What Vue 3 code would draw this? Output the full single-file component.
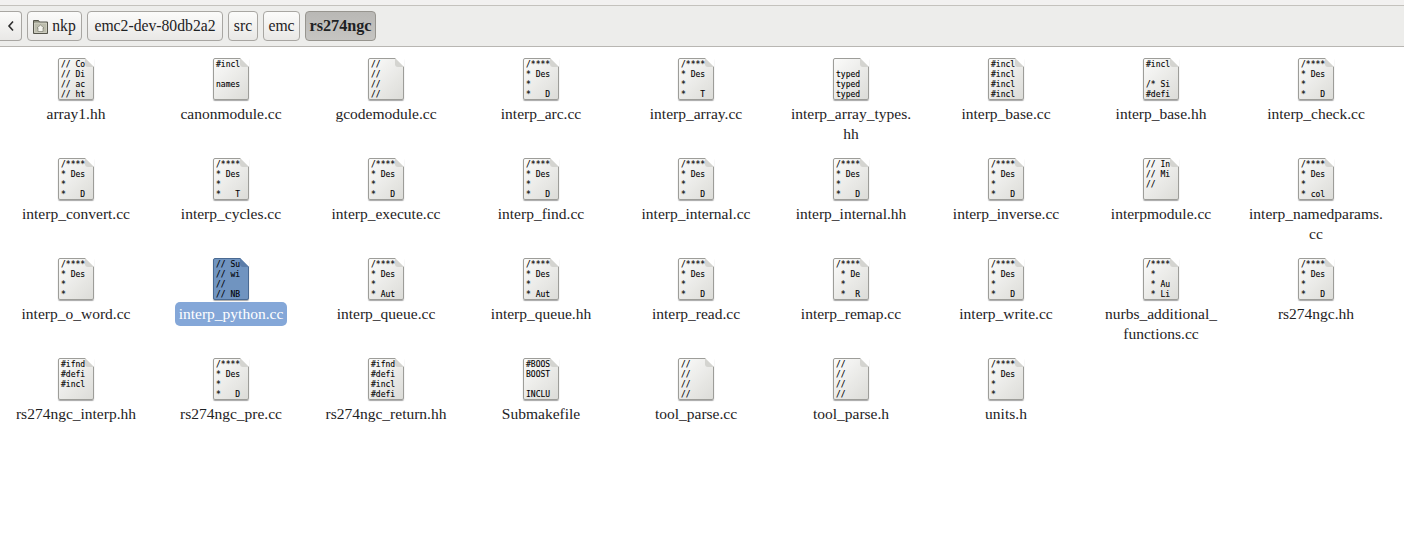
<script setup>
const H = (e) => ['/****', '* Des', '*', e]
const crumbs = [
  { label: 'emc2-dev-80db2a2', width: 136 },
  { label: 'src', width: 30 },
  { label: 'emc', width: 37 },
]
const files = [
  ['array1.hh', ['// Co', '// Di', '// ac', '// ht']],
  ['canonmodule.cc', ['#incl', '', 'names', '']],
  ['gcodemodule.cc', ['//', '//', '//', '//']],
  ['interp_arc.cc', H('*   D')],
  ['interp_array.cc', H('*   T')],
  ['interp_array_types.\nhh', ['', 'typed', 'typed', 'typed']],
  ['interp_base.cc', ['#incl', '#incl', '#incl', '#incl']],
  ['interp_base.hh', ['#incl', '', '/* Si', '#defi']],
  ['interp_check.cc', H('*   D')],
  ['interp_convert.cc', H('*   D')],
  ['interp_cycles.cc', H('*   T')],
  ['interp_execute.cc', H('*   D')],
  ['interp_find.cc', H('*   D')],
  ['interp_internal.cc', H('*   D')],
  ['interp_internal.hh', H('*   D')],
  ['interp_inverse.cc', H('*   D')],
  ['interpmodule.cc', ['// In', '// Mi', '//', '']],
  ['interp_namedparams.\ncc', H('* col')],
  ['interp_o_word.cc', H('*')],
  ['interp_python.cc', ['// Su', '// wi', '//', '// NB'], true],
  ['interp_queue.cc', H('* Aut')],
  ['interp_queue.hh', H('* Aut')],
  ['interp_read.cc', H('*   D')],
  ['interp_remap.cc', ['/****', ' * De', ' *', ' *  R']],
  ['interp_write.cc', H('*   D')],
  ['nurbs_additional_\nfunctions.cc', ['/****', ' *', ' * Au', ' * Li']],
  ['rs274ngc.hh', H('*   D')],
  ['rs274ngc_interp.hh', ['#ifnd', '#defi', '#incl', '']],
  ['rs274ngc_pre.cc', H('*   D')],
  ['rs274ngc_return.hh', ['#ifnd', '#defi', '#incl', '#defi']],
  ['Submakefile', ['#BOOS', 'BOOST', '', 'INCLU']],
  ['tool_parse.cc', ['//', '//', '//', '//']],
  ['tool_parse.h', ['//', '//', '//', '//']],
  ['units.h', H('*')],
].map(([name, lines, selected]) => ({ name, lines, selected: !!selected }))
</script>

<template>
  <div class="window">
    <div class="top-strip"></div>
    <header class="toolbar">
      <button class="crumb back">
        <svg width="8" height="12" viewBox="0 0 8 12"><path d="M6 1.500 L2 6 L6 10.500" fill="none" stroke="#2e2e2e" stroke-width="1.600"/></svg>
      </button>
      <button class="crumb home">
        <svg width="15" height="15" viewBox="0 0 15 15">
          <path d="M.5 14.500V1.500h5l1 1.500h8v11.500z" fill="#8f917f" stroke="#55554a"/>
          <path d="M1.500 13.500V4h12v9.500z" fill="#bcbdac" stroke="#e6e6dc" stroke-width=".6"/>
          <path d="M4 9l3.500-3L11 9h-1v3.500H5V9z" fill="#f5f5ee" stroke="#74746a" stroke-width=".6"/>
        </svg>
        nkp
      </button>
      <button v-for="c in crumbs" :key="c.label" class="crumb" :style="{ width: c.width + 'px' }">{{ c.label }}</button>
      <button class="crumb current">rs274ngc</button>
    </header>
    <main class="grid">
      <div v-for="f in files" :key="f.name" class="item" :class="{ selected: f.selected }">
        <div class="doc">
          <div class="sheet">
            <div v-for="(l, i) in f.lines" :key="i" class="line">{{ l }}</div>
          </div>
          <svg class="fold" width="9" height="9" viewBox="0 0 9 9">
            <path class="cut" d="M0 0 H9 V9 Z" />
            <path d="M0 0 L9 9 H3 Q0 9 0 6 Z" />
          </svg>
        </div>
        <div class="label">{{ f.name }}</div>
      </div>
    </main>
  </div>
</template>

<style scoped>
.window {
  width: 1404px;
  height: 545px;
  overflow: hidden;
  background: #fff;
  font-family: "Liberation Serif", serif;
  color: #1e2224;
}
.top-strip {
  height: 5px;
  background: #f2f1f0;
  border-bottom: 1px solid #c4c2bd;
}
.toolbar {
  display: flex;
  align-items: center;
  gap: 5px;
  height: 41px;
  box-sizing: border-box;
  background: #ededeb;
  border-bottom: 1px solid #b8b6b2;
}
.crumb {
  height: 30px;
  box-sizing: border-box;
  padding: 0;
  border: 1px solid #a8a6a2;
  border-radius: 4px;
  background: linear-gradient(#fbfbfa, #e9e8e6);
  font: 15.7px "Liberation Serif", serif;
  color: #1e2224;
  display: flex;
  align-items: center;
  justify-content: center;
  gap: 4px;
  white-space: nowrap;
}
.back {
  width: 22px;
  padding: 0 0 0 1px;
  border-radius: 0 4px 4px 0;
  border-left: 0;
}
.home {
  width: 55px;
}
.current {
  width: 71px;
  font-weight: bold;
  font-size: 16.2px;
  background: linear-gradient(#b9b8b5, #c6c5c2);
  border-color: #97958f;
}
.grid {
  display: grid;
  grid-template-columns: repeat(9, 152px);
  column-gap: 3px;
  grid-auto-rows: 100px;
  padding-top: 11px;
}
.item {
  display: flex;
  flex-direction: column;
  align-items: center;
}
.doc {
  position: relative;
  width: 36px;
  height: 43px;
}
.sheet {
  box-sizing: border-box;
  width: 36px;
  height: 42px;
  padding: 1px 0 0 2px;
  border: 1px solid #9d9d99;
  border-radius: 2px;
  background: linear-gradient(135deg, #fbfbfa, #dcdcd8);
  box-shadow: 0 1px 1px rgba(0, 0, 0, .35);
  overflow: hidden;
}
.line {
  height: 10px;
  font: 8px/10px "DejaVu Sans Mono", monospace;
  color: #000;
  -webkit-text-stroke: .1px #000;
  white-space: pre;
}
.fold {
  position: absolute;
  right: 0;
  top: 0;
  fill: #d4d4d0;
}
.fold .cut {
  fill: #fff;
}
.label {
  margin-top: 1px;
  padding: 2px 4px;
  border-radius: 5px;
  font-size: 15.5px;
  line-height: 20px;
  text-align: center;
  white-space: pre-line;
  color: #1e2224;
}
.selected .sheet {
  background: #7094c0;
  border-color: #4a6a92;
}
.selected .fold {
  fill: #5a7ca8;
}
.selected .label {
  background: #84a7d8;
  color: #fff;
}
</style>
